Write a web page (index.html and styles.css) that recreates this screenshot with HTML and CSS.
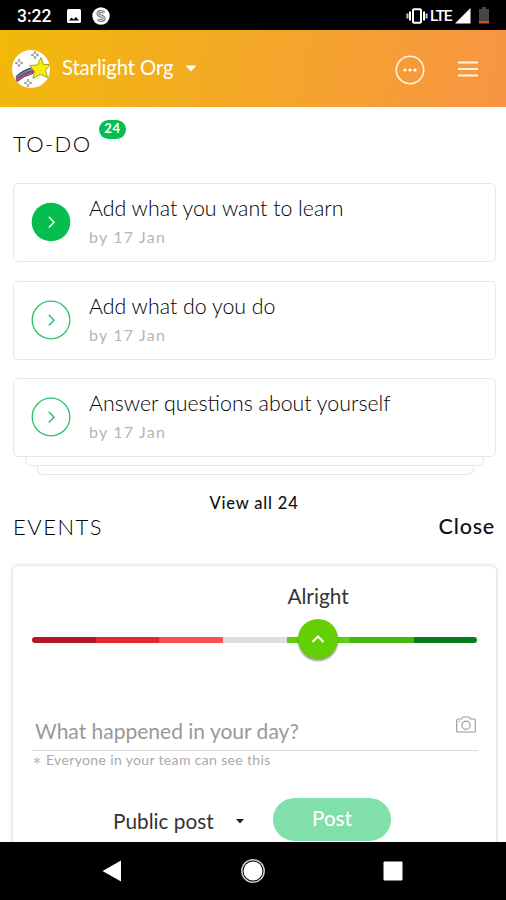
FILE: index.html
```html
<!DOCTYPE html>
<html lang="en">
<head>
<meta charset="utf-8">
<title>Starlight Org</title>
<link rel="stylesheet" href="styles.css">
</head>
<body>
<div class="phone">
  <div class="status">
    <span class="clock">3:22</span>
    <svg class="status-picture" width="14" height="14" viewBox="0 0 14 14"><rect width="14" height="14" rx="1.5" fill="#fff"/><path d="M2 11.5 4.500 8.500 6.500 10.500 9 8l3 3.500z" fill="#000"/></svg>
    <svg class="status-app" width="18" height="18" viewBox="0 0 18 18"><circle cx="9" cy="9" r="8.7" fill="#fff"/><path d="M12 5.8C10.800 4 6 4 6 6.700S12 8.600 12 11.400 7 14 6 12" fill="none" stroke="#777" stroke-width="3"/><path d="M12 5.800C10.800 4 6 4 6 6.700S12 8.600 12 11.400 7 14 6 12" fill="none" stroke="#fff" stroke-width="1"/></svg>
    <span class="spacer"></span>
    <svg class="status-vibrate" width="22" height="16" viewBox="0 0 22 16"><rect x="7" y="1.200" width="8" height="13.600" rx="1" fill="none" stroke="#fff" stroke-width="2"/><path d="M4 3.500v9M18 3.500v9" stroke="#fff" stroke-width="2"/><path d="M1.500 5.500v5M20.500 5.500v5" stroke="#ccc" stroke-width="2"/></svg>
    <span class="lte">LTE</span>
    <svg class="status-signal" width="16" height="16" viewBox="0 0 16 16"><path d="M0 15.500 15.500 0v15.500z" fill="#fff"/></svg>
    <svg class="status-battery" width="10" height="17" viewBox="0 0 10 17"><path d="M3 0h4v2h3v12H0V2h3z" fill="#464646"/><path d="M0 14h10v2.500H0z" fill="#c94f35"/></svg>
  </div>

  <header class="bar">
    <svg class="avatar" width="38" height="38" viewBox="0 0 38 38">
      <defs><clipPath id="disc"><circle cx="19" cy="19" r="19"/></clipPath></defs>
      <circle cx="19" cy="19" r="19" fill="#fff"/>
      <g clip-path="url(#disc)" fill="none">
        <path d="M4 27Q11 20 21 18" stroke="#4a3b48" stroke-width="1.500"/>
        <path d="M4 28.300Q12 21 22 19.200" stroke="#35a5d8" stroke-width="1.600"/>
        <path d="M4 29.600Q12 22.500 22 20.600" stroke="#7a3e9c" stroke-width="1.600"/>
        <path d="M4 31Q12 24 22 22" stroke="#c43c4e" stroke-width="1.600"/>
        <path d="M4 32.300Q12 25.500 21 23.300" stroke="#40313a" stroke-width="1"/>
        <path d="M29 7.500 31.500 14.500 38 14.500 33.500 20.500 35.500 27.500 28.500 24.500 21 28.500 22.500 21.500 17.500 15.500 25.500 15z" fill="#f8ed05" stroke="#a8a02c"/>
        <path d="M23 1 24 4 27 5 24 6 23 9 22 6 19 5 22 4zM7 9 8 12 11 13 8 14 7 17 6 14 3 13 6 12zM16 29 17 32 20 33 17 34 16 37 15 34 12 33 15 32z" stroke="#888" stroke-width=".8"/>
      </g>
    </svg>
    <span class="org">Starlight Org</span>
    <svg class="org-caret" width="12" height="7" viewBox="0 0 12 7"><path d="M.5.500h11L6 6.500z" fill="#fff"/></svg>
    <span class="spacer"></span>
    <svg class="more" width="30" height="30" viewBox="0 0 30 30"><circle cx="15" cy="15" r="13.700" fill="none" stroke="#fff4df" stroke-width="1.600"/><g fill="#fff"><circle cx="10" cy="15" r="1.600"/><circle cx="15" cy="15" r="1.600"/><circle cx="20" cy="15" r="1.600"/></g></svg>
    <svg class="menu" width="20" height="16" viewBox="0 0 20 16"><path d="M0 1.500h20M0 8h20M0 14.500h20" stroke="#fff4df" stroke-width="2"/></svg>
  </header>

  <main class="content">
    <div class="heading"><h2 class="todo-title">TO-DO</h2><span class="badge">24</span></div>
    <div class="tasks">
      <div class="task">
        <svg class="go" width="40" height="40" viewBox="0 0 40 40"><circle cx="20" cy="20" r="19.300" fill="#06bd50"/><path d="M17.800 14.800 23 20.200l-5.200 5.400" fill="none" stroke="#fff" stroke-width="1.500"/></svg>
        <div><div class="task-name">Add what you want to learn</div><div class="task-date">by 17 Jan</div></div>
      </div>
      <div class="task">
        <svg class="go" width="40" height="40" viewBox="0 0 40 40"><circle cx="20" cy="20" r="18.800" fill="none" stroke="#2cc068" stroke-width="1.300"/><path d="M17.800 14.800 23 20.200l-5.200 5.400" fill="none" stroke="#2cc068" stroke-width="1.500"/></svg>
        <div><div class="task-name">Add what do you do</div><div class="task-date">by 17 Jan</div></div>
      </div>
      <div class="task">
        <svg class="go" width="40" height="40" viewBox="0 0 40 40"><circle cx="20" cy="20" r="18.800" fill="none" stroke="#2cc068" stroke-width="1.300"/><path d="M17.800 14.800 23 20.200l-5.200 5.400" fill="none" stroke="#2cc068" stroke-width="1.500"/></svg>
        <div><div class="task-name">Answer questions about yourself</div><div class="task-date">by 17 Jan</div></div>
      </div>
    </div>
    <div class="stack stack-near"></div>
    <div class="stack stack-far"></div>
    <div class="view-all"><span>View all 24</span></div>
    <div class="events-head"><h2 class="events-title">EVENTS</h2><span class="close">Close</span></div>

    <section class="event">
      <div class="mood"><span>Alright</span></div>
      <div class="slider">
        <i class="s1"></i><i class="s2"></i><i class="s3"></i><i class="s4"></i><i class="s5"></i><i class="s6"></i><i class="s7"></i>
        <div class="knob"><svg width="14" height="10" viewBox="0 0 14 10"><path d="M1.500 8 7 2.500 12.500 8" fill="none" stroke="#fff" stroke-width="2"/></svg></div>
      </div>
      <div class="field">
        <span class="prompt">What happened in your day?</span>
        <svg class="camera" width="20" height="17" viewBox="0 0 20 17"><path d="M2 3h3.500L7 1h6l1.500 2H18q1.300 0 1.300 1.300v10.400Q19.300 16 18 16H2Q.7 16 .7 14.700V4.300Q.7 3 2 3z" fill="none" stroke="#999" stroke-width="1.100"/><circle cx="10" cy="9.300" r="4.100" fill="none" stroke="#999" stroke-width="1.200"/><path d="M2.500 5.300h1.500" stroke="#999"/></svg>
      </div>
      <div class="note"><svg width="8" height="9" viewBox="0 0 9 9"><path d="M4.500.500v8M.8 2.500l7.400 4M8.200 2.500l-7.400 4" stroke="#aaa" stroke-width="1"/></svg><span class="note-text">Everyone in your team can see this</span></div>
      <div class="actions">
        <span class="scope">Public post</span>
        <svg class="scope-caret" width="8" height="5" viewBox="0 0 8 5"><path d="M0 0h8L4 4.500z" fill="#222"/></svg>
        <div class="post"><span>Post</span></div>
      </div>
    </section>
  </main>

  <nav class="nav">
    <svg width="20" height="22" viewBox="0 0 20 22"><path d="M.5 11 19 .500v21z" fill="#fff"/></svg>
    <svg width="24" height="24" viewBox="0 0 24 24"><circle cx="12" cy="12" r="11.200" fill="none" stroke="#ccc" stroke-width="1.500"/><circle cx="12" cy="12" r="9.500" fill="#fff"/></svg>
    <svg width="20" height="20" viewBox="0 0 20 20"><rect x=".5" y=".5" width="19" height="19" rx="1" fill="#fff"/></svg>
  </nav>
</div>
</body>
</html>
```

FILE: styles.css
```css
* { box-sizing: border-box; }
body { margin: 0; background: #fff; font-family: Lato, sans-serif; color: #333; }
svg { display: block; flex: none; }
h2 { margin: 0; font-weight: 400; }
.phone { width: 506px; height: 900px; overflow: hidden; display: flex; flex-direction: column; white-space: nowrap; }
.spacer { flex: 1; }

.status { height: 30px; flex: none; background: #000; color: #fff; display: flex; align-items: center; padding: 1px 17px 0; }
.clock { width: 50px; font: 500 17.5px/30px Roboto, sans-serif; }
.status-app { margin-left: 11px; }
.lte { font: 500 15.5px/30px Roboto, sans-serif; width: 22px; margin: 0 3px 0 2px; letter-spacing: -1.1px; }
.status-battery { margin-left: 8px; margin-right: 0; }

.bar { height: 77px; flex: none; display: flex; align-items: center; padding: 0 28px 0 12px; background: linear-gradient(100deg, #f1b90a 0%, #f4a728 50%, #f89444 100%); color: #fff; }
.org { font-size: 20.3px; line-height: 28px; margin: -3px 0 0 12px; width: 112px; letter-spacing: -.1px; }
.org-caret { margin-left: 11px; }
.more { margin-right: 33px; margin-top: 3px; }

.content { flex: 1; min-height: 0; overflow: hidden; padding: 21px 11px 0 13px; }
.heading { display: flex; height: 55px; }
.todo-title { font-size: 22px; font-weight: 300; line-height: 31px; letter-spacing: 1.4px; width: 86px; color: #000; }
.badge { width: 27px; height: 19px; margin-top: -8px; border-radius: 10px; background: #06bd50; color: #fff; font-size: 13px; font-weight: 700; line-height: 17px; letter-spacing: .6px; text-align: center; }
.tasks { display: flex; flex-direction: column; gap: 18.500px; }
.task { height: 79px; width: 482.500px; border: 1.500px solid #e8e8e8; border-radius: 5px; display: flex; padding: 10px 0 0 18px; }
.go { margin: 8px 18px 0 -1px; }
.task-name { font-size: 21.35px; font-weight: 300; line-height: 28px; color: #000; }
.task-date { font-size: 16px; line-height: 24px; margin-top: 3px; color: #b5b5b5; letter-spacing: 1.2px; }
.stack { height: 9px; border: 1px solid #e8e8e8; border-top: 0; border-radius: 0 0 6px 6px; }
.stack-near { width: 459px; margin-left: 12px; }
.stack-far { width: 437px; margin-left: 24px; }
.view-all { margin-top: 19px; height: 18px; line-height: 19px; font-size: 16.5px; font-weight: 500; text-align: center; color: #111; letter-spacing: .8px; }
.events-head { display: flex; justify-content: space-between; height: 54px; font-size: 22px; line-height: 29px; }
.events-title { font-size: 22px; font-weight: 300; letter-spacing: 1.5px; color: #000; }
.close { font-size: 21.5px; font-weight: 500; color: #111; letter-spacing: .8px; }

.event { width: 482.500px; height: 300px; padding: 18px 18px 0 19px; border-radius: 5px; box-shadow: 0 0 4px rgba(0, 0, 0, .22); }
.mood { width: 572px; text-align: center; font-size: 20.8px; line-height: 24px; }
.slider { position: relative; display: grid; grid-template-columns: repeat(7, 1fr); height: 6px; margin-top: 29px; }
.s1 { background: #b41724; border-radius: 3px 0 0 3px; }
.s2 { background: #e32630; }
.s3 { background: #fb4e50; }
.s4 { background: #dedede; }
.s5 { background: #5dce14; }
.s6 { background: #44b60c; }
.s7 { background: #087c1b; border-radius: 0 3px 3px 0; }
.knob { position: absolute; left: 266px; top: -18px; width: 40px; height: 40px; border-radius: 50%; background: #64cf04; box-shadow: 0 2px 2px rgba(0, 0, 0, .4); display: grid; place-items: center; }
.field { display: flex; justify-content: space-between; height: 34px; margin-top: 74px; padding: 0 2px 0 3px; border-bottom: 1.500px solid #ddd; }
.prompt { font-size: 21px; line-height: 28px; color: #999; }
.camera { margin-top: -1px; }
.note { display: flex; align-items: center; height: 18px; font-size: 14px; line-height: 18px; color: #aaa; gap: 5px; padding-left: 1px; letter-spacing: .35px; }
.actions { display: flex; align-items: center; height: 43px; margin-top: 29px; padding-left: 81px; }
.scope { font-size: 20.8px; line-height: 28px; width: 123px; margin-top: 3px; }
.scope-caret { margin-top: 3px; }
.post { width: 118px; height: 43px; margin-left: 29px; border-radius: 22px; background: #80dfaa; color: #fff; text-align: center; font-size: 20.5px; font-weight: 500; line-height: 41px; }

.nav { height: 58px; flex: none; background: #000; display: flex; align-items: center; justify-content: space-between; padding: 0 103px 0 102px; }
```
